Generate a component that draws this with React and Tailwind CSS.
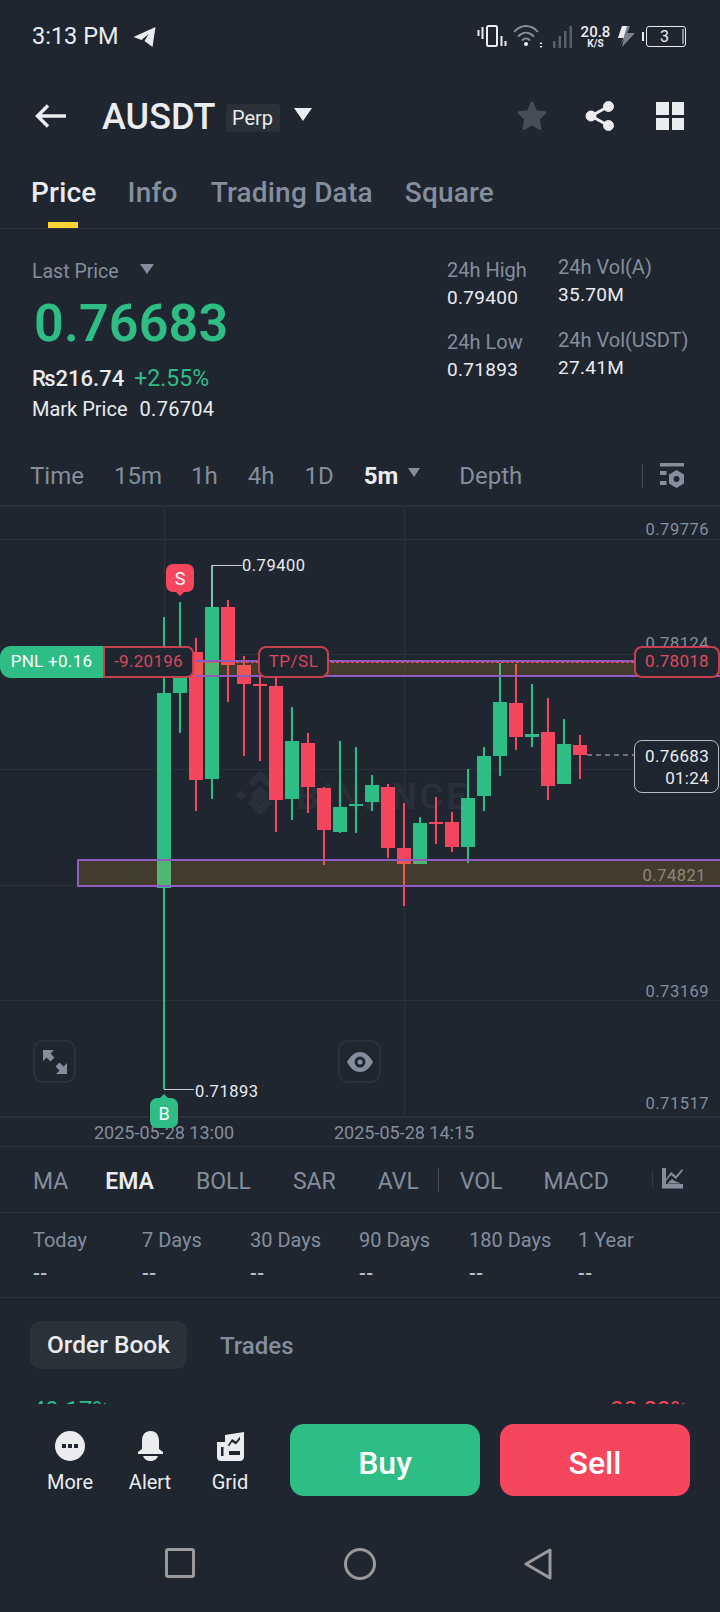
import React from 'react';

const GREEN = '#2ebd85';
const RED = '#f6465d';

// x, wick top, wick bottom, body top, body bottom, colour
const candles = [
  [164, 617, 1089, 693, 888, 'g'],
  [180, 602, 733, 658, 693, 'g'],
  [196, 638, 811, 652, 780, 'r'],
  [212, 565, 799, 607, 779, 'g'],
  [228, 600, 702, 607, 665, 'r'],
  [244, 656, 756, 665, 684, 'r'],
  [260, 675, 761, 684, 686, 'r'],
  [276, 677, 832, 686, 800, 'r'],
  [292, 707, 820, 741, 799, 'g'],
  [308, 733, 813, 743, 787, 'r'],
  [324, 787, 865, 788, 830, 'r'],
  [340, 741, 833, 807, 832, 'g'],
  [356, 747, 833, 804, 806, 'g'],
  [372, 775, 811, 785, 802, 'g'],
  [388, 784, 858, 787, 848, 'r'],
  [404, 803, 906, 848, 864, 'r'],
  [420, 817, 863, 823, 864, 'g'],
  [436, 797, 844, 822, 824, 'r'],
  [452, 812, 852, 822, 847, 'r'],
  [468, 769, 863, 798, 847, 'g'],
  [484, 747, 811, 756, 796, 'g'],
  [500, 663, 776, 702, 756, 'g'],
  [516, 664, 750, 703, 737, 'r'],
  [532, 684, 747, 734, 737, 'g'],
  [548, 698, 800, 732, 786, 'r'],
  [564, 719, 784, 744, 784, 'g'],
  [580, 735, 779, 745, 755, 'r'],
];

const gridYs = [539, 654, 769, 885, 1000];

function ChartSvg() {
  // drawn in page coordinates, the chart starts at y=505
  return (
    <svg className="absolute left-0 top-0" width="720" height="611" viewBox="0 505 720 611">
      <rect x="0" y="505" width="720" height="2" fill="#2b3139" />
      {gridYs.map((y) => (
        <line key={y} x1="0" x2="720" y1={y + 0.5} y2={y + 0.5} stroke="#2b3139" strokeWidth="1" />
      ))}
      <line x1="164.5" x2="164.5" y1="505" y2="1116" stroke="#2b3139" />
      <line x1="404.5" x2="404.5" y1="505" y2="1116" stroke="#2b3139" />

      {/* watermark */}
      <path
        fill="#2a3039"
        d="M260 770l12 12-5 5-7-7-7 7-5-5zM236 795l5-5 5 5-5 5zM260 786l9 9-9 9-9-9zM274 795l5-5 5 5-5 5zM248 803l5-5 7 7 7-7 5 5-12 12z"
      />

      {candles.map(([x, wt, wb, bt, bb, c]) => {
        const col = c === 'g' ? GREEN : RED;
        return (
          <g key={x}>
            <rect x={x - 1} y={wt} width="2" height={wb - wt} fill={col} />
            <rect x={x - 7} y={bt} width="14" height={bb - bt} fill={col} />
          </g>
        );
      })}

      {/* drawn zones */}
      <rect x="196" y="661" width="524" height="15" fill="#d89426" fillOpacity="0.2" />
      <rect x="78" y="860" width="642" height="26" fill="#d89426" fillOpacity="0.2" />
      <line x1="196" x2="720" y1="661" y2="661" stroke="#8e5cc0" strokeWidth="2" />
      <line x1="196" x2="720" y1="676" y2="676" stroke="#8e5cc0" strokeWidth="2" />
      <line x1="196" x2="720" y1="662.5" y2="662.5" stroke={RED} strokeWidth="1" strokeDasharray="3 2" />
      <path d="M720 860H78v26h642" fill="none" stroke="#8e5cc0" strokeWidth="2" />

      {/* high / low leaders, last price */}
      <path d="M212 607V565.5h30" fill="none" stroke="#c9ccd1" strokeWidth="1" />
      <path d="M164 1089.5h30" fill="none" stroke="#c9ccd1" strokeWidth="1" />
      <line x1="587" x2="634" y1="755" y2="755" stroke="#b7bdc6" strokeWidth="1" strokeDasharray="5 4" />
    </svg>
  );
}

function PriceAxisLabel({ top, children }) {
  return (
    <div className="absolute right-[11px] text-[16.5px] leading-5 tracking-[0.5px] text-[#848e9c]" style={{ top }}>
      {children}
    </div>
  );
}

function Chart() {
  return (
    <div className="relative z-10 h-[611px]">
      <div className="absolute left-[296px] top-[274px] text-[36px] leading-9 font-bold tracking-[3px] text-[#2a3039]">BINANCE</div>
      <ChartSvg />
      <PriceAxisLabel top={15}>0.79776</PriceAxisLabel>
      <PriceAxisLabel top={129}>0.78124</PriceAxisLabel>
      <PriceAxisLabel top={242}>0.76472</PriceAxisLabel>
      <div className="absolute right-[14px] top-[361px] text-[16.5px] leading-5 tracking-[0.5px] text-[#8b8a7c]">0.74821</div>
      <PriceAxisLabel top={477}>0.73169</PriceAxisLabel>
      <PriceAxisLabel top={589}>0.71517</PriceAxisLabel>

      <div className="absolute left-[242px] top-[51px] text-[16.5px] leading-5 tracking-[0.5px] text-[#eaecef]">0.79400</div>
      <div className="absolute left-[195px] top-[577px] text-[16.5px] leading-5 tracking-[0.5px] text-[#eaecef]">0.71893</div>

      {/* S marker */}
      <div className="absolute left-[166px] top-[59px] flex h-[28px] w-[28px] items-center justify-center rounded-[7px] bg-[#f6465d] text-[18px] text-white">
        S
        <span className="absolute bottom-[-4px] left-[9px] h-0 w-0 border-x-[5px] border-t-[5px] border-x-transparent border-t-[#f6465d]" />
      </div>
      {/* B marker */}
      <div className="absolute left-[150px] top-[593px] flex h-[30px] w-[28px] items-center justify-center rounded-[7px] bg-[#2ebd85] text-[18px] text-white">
        B
        <span className="absolute top-[-4px] left-[9px] h-0 w-0 border-x-[5px] border-b-[5px] border-x-transparent border-b-[#2ebd85]" />
      </div>

      {/* position line */}
      <div className="absolute left-0 top-[141px] flex h-[32px] w-[103px] items-center justify-center rounded-l-[11px] bg-[#2ebd85] text-[17px] tracking-[0.3px] text-white">
        PNL +0.16
      </div>
      <div className="absolute left-[103px] top-[141px] flex h-[32px] w-[91px] items-center justify-center rounded-r-[7px] border-2 border-[#c8404f] bg-[#1f2630] text-[17px] tracking-[0.3px] text-[#d9475a]">
        -9.20196
      </div>
      <div className="absolute left-[258px] top-[141px] flex h-[32px] w-[71px] items-center justify-center rounded-[8px] border-2 border-[#c8404f] bg-[#1f2630] text-[17px] tracking-[0.5px] text-[#d9475a]">
        TP/SL
      </div>
      <div className="absolute left-[634px] top-[141px] flex h-[32px] w-[86px] items-center justify-center rounded-[8px] border-2 border-[#c8404f] bg-[#1f2630] text-[17px] tracking-[0.3px] text-[#e0485c]">
        0.78018
      </div>
      {/* last price */}
      <div className="absolute left-[634px] top-[235px] flex h-[53px] w-[85px] flex-col items-end justify-center rounded-[8px] border border-[#b7bdc6] bg-[#1f2630]/90 pr-[9px] text-[17px] leading-[22px] tracking-[0.3px] text-[#eaecef]">
        <span>0.76683</span>
        <span>01:24</span>
      </div>

      {/* floating buttons */}
      <button className="absolute left-[33px] top-[535px] flex h-[43px] w-[43px] items-center justify-center rounded-[10px] border-2 border-[#2b3139]">
        <svg width="26" height="26" viewBox="0 0 26 26" fill="#848e9c">
          <path d="M1 1h11L8.500 4.500l4 4-4 4-4-4L1 12z" />
          <path d="M25 25H14l3.500-3.500-4-4 4-4 4 4L25 14z" />
        </svg>
      </button>
      <button className="absolute left-[338px] top-[535px] flex h-[43px] w-[43px] items-center justify-center rounded-[10px] border-2 border-[#2b3139]">
        <svg width="28" height="22" viewBox="0 0 28 22" fill="none">
          <path d="M1 11 C5 4 9 1 14 1s9 3 13 10c-4 7-8 10-13 10S5 18 1 11z" fill="#848e9c" />
          <circle cx="14" cy="11" r="5.500" fill="#1f2630" />
          <circle cx="14" cy="11" r="2.500" fill="#848e9c" />
        </svg>
      </button>
    </div>
  );
}

function StatusBar() {
  return (
    <div className="flex h-[72px] items-center pl-[32px] pt-[1px]">
      <span className="text-[23.5px] leading-none text-[#eaecef]">3:13 PM</span>
      <svg className="ml-[15px]" width="23" height="20" viewBox="0 0 23 20" fill="#eaecef">
        <path d="M22.500 0 .5 10l8 3 7-6-4 7 8 6z" />
      </svg>
      {/* right side icons sit in one strip from x=476 */}
      <svg className="ml-[321px]" width="32" height="24" viewBox="0 0 32 24" fill="none">
        <rect x="10" y="1" width="10" height="20" rx="1.500" stroke="#eaecef" strokeWidth="2" />
        <path d="M1.500 5v6M5.500 2v12M24.500 11v10M28.500 16v5" stroke="#eaecef" strokeWidth="2" />
      </svg>
      <svg className="ml-[3px]" width="32" height="26" viewBox="0 0 32 26" fill="none" stroke="#8a8f96" strokeWidth="1.800">
        <path d="M2 8c7-8 17-8 24 0M6 12.500c5-5 11-5 16 0M10 16.500c3-3 5-3 8 0" />
        <circle cx="14" cy="20" r="2" fill="#eaecef" stroke="none" />
        <path d="M29 18l1.500 2h-3zM29 24l1.500-2h-3z" fill="#eaecef" stroke="none" />
      </svg>
      <svg className="ml-[9px]" width="20" height="22" viewBox="0 0 20 22" fill="#5b6068">
        <rect x="0" y="15" width="2.500" height="7" />
        <rect x="5.500" y="10" width="2.500" height="12" />
        <rect x="11" y="5" width="2.500" height="17" />
        <rect x="16.500" y="0" width="2.500" height="22" />
      </svg>
      <div className="ml-[8px] flex w-[28px] flex-col items-center text-[15px] leading-[13px] font-medium text-[#eaecef]">
        <span>20.8</span>
        <span className="text-[10px] leading-[9px] font-bold">K/S</span>
      </div>
      <svg className="ml-[8px]" width="18" height="21" viewBox="0 0 18 21">
        <path d="M5 0h8l-3 7h8L5 21l2-9H1z" fill="#7d828a" />
        <path d="M5 0h5L6.500 12 3 20 7 12H1z" fill="#eaecef" />
      </svg>
      <span className="ml-[7px] h-[9px] w-[2px] bg-[#eaecef]" />
      <div className="relative ml-[2px] flex h-[21px] w-[40px] items-center justify-center rounded-[3px] border border-[#eaecef] pr-[4px] text-[16px] leading-none text-[#eaecef]">
        3
        <span className="absolute right-[1px] top-[2px] h-[15px] w-[2px] bg-[#8a8f96]" />
      </div>
    </div>
  );
}

function Header() {
  return (
    <div className="flex h-[88px] items-center pl-[35px] pr-[36px]">
      <svg width="31" height="24" viewBox="0 0 31 24" fill="none" stroke="#eaecef" strokeWidth="3.400">
        <path d="M31 12H3M13 1.500 2.500 12 13 22.500" />
      </svg>
      <span className="ml-[36px] mt-[2px] text-[36px] leading-none font-medium text-[#eaecef]">AUSDT</span>
      <span className="ml-[10px] mt-[3px] flex h-[28px] w-[54px] items-center justify-center rounded-[4px] bg-[#2b3139] text-[20px] leading-none text-[#eaecef]">Perp</span>
      <span className="ml-[14px] mb-[4px] h-0 w-0 border-x-[9px] border-t-[13px] border-x-transparent border-t-[#eaecef]" />
      <svg className="ml-auto" width="32" height="32" viewBox="0 0 32 32" fill="#474d57" stroke="#474d57" strokeWidth="3" strokeLinejoin="round">
        <path d="M16 3l3.800 8.700 9.200 1-6.900 6.300 1.900 9.500L16 23.700 8 28.500 9.900 19 3 12.700l9.200-1z" />
      </svg>
      <svg className="ml-[37px]" width="30" height="30" viewBox="0 0 30 30" fill="#eaecef" stroke="#eaecef">
        <circle cx="23.500" cy="5.500" r="5" />
        <circle cx="6" cy="15" r="5" />
        <circle cx="23.500" cy="24.500" r="5" />
        <path d="M23.500 5.500 6 15l17.500 9.500" fill="none" strokeWidth="3" />
      </svg>
      <div className="ml-[41px] grid h-[28px] w-[28px] grid-cols-2 gap-[3px]">
        <span className="bg-[#eaecef]" />
        <span className="bg-[#eaecef]" />
        <span className="bg-[#eaecef]" />
        <span className="bg-[#eaecef]" />
      </div>
    </div>
  );
}

function Tabs() {
  return (
    <div className="relative flex h-[69px] items-start border-b border-[#2b3139] pl-[31px] pt-[14px] text-[28px] leading-[38px] tracking-[0.2px] text-[#848e9c]">
      <span className="font-medium text-[#eaecef]">Price</span>
      <span className="ml-[31px] font-medium">Info</span>
      <span className="ml-[33px] font-medium">Trading Data</span>
      <span className="ml-[32px] font-medium">Square</span>
      <span className="absolute bottom-0 left-[48px] h-[6px] w-[30px] bg-[#fcd535]" />
    </div>
  );
}

function StatCell({ label, value, className }) {
  return (
    <div className={className}>
      <div className="text-[20px] leading-[24px] text-[#848e9c]">{label}</div>
      <div className="mt-[4px] text-[19px] leading-[24px] tracking-[0.3px] text-[#eaecef]">{value}</div>
    </div>
  );
}

function PriceStats() {
  return (
    <div className="flex h-[216px] pl-[32px]">
      <div className="w-[415px] pt-[31px]">
        <div className="flex items-center text-[19.5px] leading-[24px] text-[#848e9c]">
          Last Price
          <span className="ml-[21px] mb-[6px] h-0 w-0 border-x-[7px] border-t-[10px] border-x-transparent border-t-[#848e9c]" />
        </div>
        <div className="ml-[2px] mt-[10px] text-[52px] leading-[60px] font-semibold tracking-[0.2px] text-[#2ebd85]">0.76683</div>
        <div className="mt-[11px] flex items-baseline text-[22px] leading-[28px]">
          <span className="font-medium text-[#eaecef]">₨216.74</span>
          <span className="ml-[10px] text-[23px] text-[#2ebd85]">+2.55%</span>
        </div>
        <div className="mt-[3px] flex text-[20px] leading-[26px] text-[#eaecef]">
          <span>Mark Price</span>
          <span className="ml-[12px] tracking-[0.3px]">0.76704</span>
        </div>
      </div>
      <div className="grid grid-cols-[111px_auto] content-start pt-[28px]">
        <StatCell label="24h High" value="0.79400" className="pt-[1px]" />
        <StatCell label="24h Vol(A)" value="35.70M" className="mt-[-2px]" />
        <StatCell label="24h Low" value="0.71893" className="mt-[20px]" />
        <StatCell label="24h Vol(USDT)" value="27.41M" className="mt-[18px]" />
      </div>
    </div>
  );
}

function TimeRow() {
  return (
    <div className="flex h-[60px] items-center pl-[30px] pr-[35px] pt-[1px] text-[24px] text-[#848e9c]">
      <span>Time</span>
      <span className="ml-[30px]">15m</span>
      <span className="ml-[29px]">1h</span>
      <span className="ml-[30px]">4h</span>
      <span className="ml-[30px]">1D</span>
      <span className="ml-[30px] font-bold text-[#eaecef]">5m</span>
      <span className="ml-[10px] mb-[6px] h-0 w-0 border-x-[6px] border-t-[9px] border-x-transparent border-t-[#848e9c]" />
      <span className="ml-[39px]">Depth</span>
      <span className="ml-auto h-[24px] w-px bg-[#474d57]" />
      <svg className="ml-[17px]" width="25" height="25" viewBox="0 0 25 25" fill="#848e9c">
        <rect x="0" y="0" width="24" height="3.500" />
        <rect x="0" y="8" width="6.500" height="4" />
        <rect x="0" y="18" width="6.500" height="4" />
        <path fillRule="evenodd" d="M16.500 7l7.500 4.500v9L16.500 25 9 20.500v-9zM16.500 13a3 3 0 1 0 0 6 3 3 0 0 0 0-6z" />
      </svg>
    </div>
  );
}

function DateAxis() {
  return (
    <div className="relative h-[30px] border-t-2 border-[#2b3139] text-[18px] leading-[30px] text-[#848e9c]">
      <span className="absolute left-[94px] top-0 w-[140px] text-center whitespace-nowrap">2025-05-28 13:00</span>
      <span className="absolute left-[334px] top-0 w-[140px] text-center whitespace-nowrap">2025-05-28 14:15</span>
    </div>
  );
}

function IndicatorRow() {
  return (
    <div className="flex h-[67px] items-center border-y border-[#2b3139] pl-[33px] pr-[37px] pt-[5px] text-[23px] text-[#848e9c]">
      <span>MA</span>
      <span className="ml-[37px] font-semibold text-[#eaecef]">EMA</span>
      <span className="ml-[42px]">BOLL</span>
      <span className="ml-[42px]">SAR</span>
      <span className="ml-[42px]">AVL</span>
      <span className="ml-[19px] mb-[5px] h-[24px] w-px bg-[#474d57]" />
      <span className="ml-[21px]">VOL</span>
      <span className="ml-[41px]">MACD</span>
      <span className="ml-auto mb-[6px] h-[17px] w-px bg-[#343a44]" />
      <svg className="ml-[9px] mb-[7px]" width="21" height="21" viewBox="0 0 21 21" fill="#848e9c">
        <path d="M0 0h4v16h17v4.500H0z" />
        <path d="M4 11l5-7 5 4 6-7 1 1.500-7 8.500-5-4-5 6z" />
        <path d="M5 15.500l5-4.500 3 2 6 2.500z" />
      </svg>
    </div>
  );
}

const returns = ['Today', '7 Days', '30 Days', '90 Days', '180 Days', '1 Year'];

function ReturnsRow() {
  return (
    <div className="grid h-[85px] grid-cols-[109px_108px_109px_110px_109px_auto] border-b border-[#2b3139] pl-[33px] pt-[14px]">
      {returns.map((r) => (
        <div key={r}>
          <div className="text-[20px] leading-[26px] text-[#848e9c]">{r}</div>
          <div className="mt-[7px] text-[20px] leading-[26px] font-medium tracking-[0.5px] text-[#b7bdc6]">--</div>
        </div>
      ))}
    </div>
  );
}

function OrderBook() {
  return (
    <div className="h-[106px] overflow-hidden pl-[30px]">
      <div className="flex items-center pt-[23px]">
        <span className="flex h-[48px] w-[157px] items-center justify-center rounded-[10px] bg-[#2b3139] pt-[1px] text-[24.5px] font-medium text-[#eaecef]">Order Book</span>
        <span className="ml-[33px] pt-[1px] text-[24px] font-medium text-[#848e9c]">Trades</span>
      </div>
      <div className="mt-[29px] flex justify-between pl-[2px] pr-[32px] text-[24px] leading-[24px]">
        <span className="text-[#2ebd85]">49.17%</span>
        <span className="text-[#f6465d]">38.83%</span>
      </div>
    </div>
  );
}

function BottomAction({ label, children }) {
  return (
    <div className="flex w-[80px] flex-col items-center pt-[7px]">
      <div className="flex h-[30px] items-center">{children}</div>
      <span className="mt-[8px] text-[20px] leading-[26px] text-[#eaecef]">{label}</span>
    </div>
  );
}

function BottomBar() {
  return (
    <div className="flex h-[112px] items-start pl-[30px] pr-[30px] pt-[20px]">
      <BottomAction label="More">
        <svg width="30" height="30" viewBox="0 0 30 30">
          <circle cx="15" cy="15" r="15" fill="#eaecef" />
          <rect x="7" y="13" width="4" height="4" fill="#1f2630" />
          <rect x="13" y="13" width="4" height="4" fill="#1f2630" />
          <rect x="19" y="13" width="4" height="4" fill="#1f2630" />
        </svg>
      </BottomAction>
      <BottomAction label="Alert">
        <svg width="27" height="30" viewBox="0 0 27 30" fill="#eaecef">
          <path d="M13.500 0c5.500 0 8.500 4 8.500 10v8l4 3v2H1v-2l4-3v-8C5 4 8 0 13.500 0z" />
          <path d="M6 25h15c-1 3-4 5-7.500 5S7 28 6 25z" />
        </svg>
      </BottomAction>
      <BottomAction label="Grid">
        <svg width="27" height="29" viewBox="0 0 27 29" fill="#eaecef">
          <path d="M8 3l19-3v25c0 2-1.500 4-4 4H4c-2.500 0-4-1.500-4-4V10h8z" />
          <path d="M11 13l4-6 4 2.500 4-5v3l-4 5-4-2.500-3 4.500z" fill="#1f2630" />
          <rect x="4" y="15" width="2.500" height="9" fill="#1f2630" />
          <rect x="12" y="19" width="11" height="4" fill="#1f2630" />
        </svg>
      </BottomAction>
      <button className="ml-[20px] flex h-[72px] w-[190px] items-center justify-center rounded-[14px] bg-[#2ebd85] pt-[5px] text-[32px] font-medium text-white">Buy</button>
      <button className="ml-[20px] flex h-[72px] w-[190px] items-center justify-center rounded-[14px] bg-[#f6465d] pt-[5px] text-[32px] font-medium text-white">Sell</button>
    </div>
  );
}

function NavBar() {
  return (
    <div className="flex h-[96px] items-start pl-[165px] pt-[32px]">
      <svg width="30" height="30" viewBox="0 0 30 30" fill="none" stroke="#9a9a9a" strokeWidth="3" strokeLinejoin="round">
        <rect x="1.500" y="1.500" width="27" height="27" rx="1.500" />
      </svg>
      <svg className="ml-[149px]" width="32" height="32" viewBox="0 0 32 32" fill="none" stroke="#9a9a9a" strokeWidth="3">
        <circle cx="16" cy="16" r="14.500" />
      </svg>
      <svg className="ml-[148px]" width="28" height="32" viewBox="0 0 28 32" fill="none" stroke="#9a9a9a" strokeWidth="3" strokeLinejoin="round">
        <path d="M26 2v28L2 16z" />
      </svg>
    </div>
  );
}

export default function App() {
  return (
    <div className="h-[1612px] w-[720px] overflow-hidden bg-[#1f2630] font-['Roboto',sans-serif]">
      <StatusBar />
      <Header />
      <Tabs />
      <PriceStats />
      <TimeRow />
      <Chart />
      <DateAxis />
      <IndicatorRow />
      <ReturnsRow />
      <OrderBook />
      <BottomBar />
      <NavBar />
    </div>
  );
}
